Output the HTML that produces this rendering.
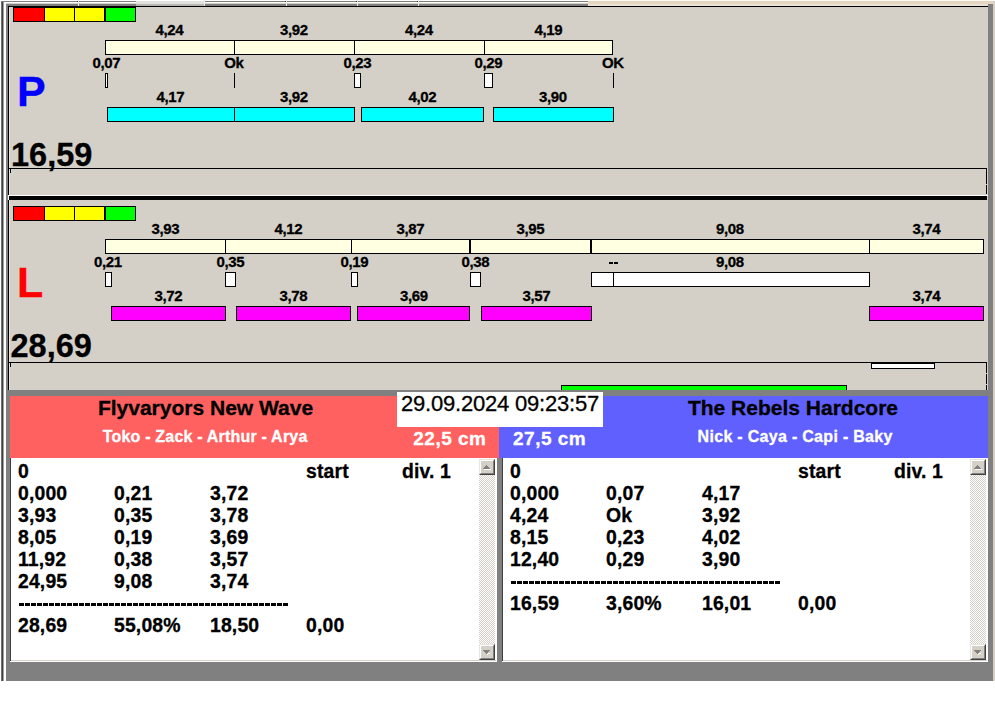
<!DOCTYPE html>
<html><head><meta charset="utf-8"><style>
html,body{margin:0;padding:0;}
body{width:995px;height:716px;overflow:hidden;position:relative;background:#fff;font-family:"Liberation Sans",sans-serif;}
body>div{position:absolute;box-sizing:content-box;}
.t{white-space:pre;-webkit-text-stroke:0.3px currentColor;}
</style></head><body>
<div style="left:0px;top:0px;width:995px;height:681px;background:#d4d0c8;"></div>
<div style="left:0px;top:0px;width:1px;height:716px;background:#fff;"></div>
<div style="left:0px;top:0px;width:995px;height:1px;background:#fff;"></div>
<div style="left:1px;top:1px;width:1px;height:680px;background:#707070;"></div>
<div style="left:2px;top:1px;width:1px;height:680px;background:#404040;"></div>
<div style="left:3px;top:1px;width:1px;height:680px;background:#a0a0a0;"></div>
<div style="left:4px;top:1px;width:2px;height:680px;background:#ffffff;"></div>
<div style="left:6px;top:4px;width:2px;height:677px;background:#808080;"></div>
<div style="left:9px;top:7px;width:1px;height:383px;background:#e6e3dc;"></div>
<div style="left:1px;top:1px;width:587px;height:1px;background:#808080;"></div>
<div style="left:4px;top:2px;width:584px;height:1px;background:#ffffff;"></div>
<div style="left:6px;top:4px;width:582px;height:2px;background:#808080;"></div>
<div style="left:78px;top:0px;width:1px;height:6px;background:#e8e8e8;"></div>
<div style="left:77px;top:1px;width:1px;height:1px;background:#303030;"></div>
<div style="left:204px;top:0px;width:1px;height:6px;background:#e8e8e8;"></div>
<div style="left:203px;top:1px;width:1px;height:1px;background:#303030;"></div>
<div style="left:286px;top:0px;width:1px;height:6px;background:#e8e8e8;"></div>
<div style="left:285px;top:1px;width:1px;height:1px;background:#303030;"></div>
<div style="left:357px;top:0px;width:1px;height:6px;background:#e8e8e8;"></div>
<div style="left:356px;top:1px;width:1px;height:1px;background:#303030;"></div>
<div style="left:418px;top:0px;width:1px;height:6px;background:#e8e8e8;"></div>
<div style="left:417px;top:1px;width:1px;height:1px;background:#303030;"></div>
<div style="left:136px;top:1px;width:68px;height:3px;background:#e4e2dc;"></div>
<div style="left:136px;top:4px;width:68px;height:2px;background:#b8b6b0;"></div>
<div style="left:588px;top:0px;width:405px;height:1px;background:#fcfbef;"></div>
<div style="left:588px;top:1px;width:405px;height:3px;background:#e4d6c3;"></div>
<div style="left:588px;top:4px;width:405px;height:2px;background:#ebe2d4;"></div>
<div style="left:988px;top:4px;width:5px;height:677px;background:#808080;"></div>
<div style="left:6px;top:662px;width:987px;height:19px;background:#808080;"></div>
<div style="left:6px;top:390px;width:4px;height:272px;background:#808080;"></div>
<div style="left:8px;top:6px;width:980px;height:1px;background:#000;"></div>
<div style="left:8px;top:6px;width:1px;height:189px;background:#000;"></div>
<div style="left:8px;top:200px;width:1px;height:190px;background:#000;"></div>
<div style="left:13px;top:7px;width:30px;height:13px;background:#ff0000;border:1px solid #000"></div>
<div style="left:44px;top:7px;width:29px;height:13px;background:#ffff00;border:1px solid #000"></div>
<div style="left:74px;top:7px;width:29px;height:13px;background:#ffff00;border:1px solid #000"></div>
<div style="left:105px;top:7px;width:29px;height:13px;background:#00ff00;border:1px solid #000"></div>
<div style="left:105px;top:40px;width:506px;height:13px;background:#ffffe1;border:1px solid #000"></div>
<div style="left:234px;top:40px;width:1px;height:15px;background:#000;"></div>
<div style="left:354px;top:40px;width:1px;height:15px;background:#000;"></div>
<div style="left:484px;top:40px;width:1px;height:15px;background:#000;"></div>
<div class="t" style="top:22px;font-size:15px;font-weight:bold;color:#000;line-height:15px;letter-spacing:-0.35px;left:119.325px;width:100px;text-align:center;">4,24</div>
<div class="t" style="top:22px;font-size:15px;font-weight:bold;color:#000;line-height:15px;letter-spacing:-0.35px;left:243.825px;width:100px;text-align:center;">3,92</div>
<div class="t" style="top:22px;font-size:15px;font-weight:bold;color:#000;line-height:15px;letter-spacing:-0.35px;left:368.825px;width:100px;text-align:center;">4,24</div>
<div class="t" style="top:22px;font-size:15px;font-weight:bold;color:#000;line-height:15px;letter-spacing:-0.35px;left:498.325px;width:100px;text-align:center;">4,19</div>
<div class="t" style="top:55px;font-size:15px;font-weight:bold;color:#000;line-height:15px;letter-spacing:-0.35px;left:56.325px;width:100px;text-align:center;">0,07</div>
<div class="t" style="top:55px;font-size:15px;font-weight:bold;color:#000;line-height:15px;letter-spacing:-0.35px;left:183.825px;width:100px;text-align:center;">Ok</div>
<div class="t" style="top:55px;font-size:15px;font-weight:bold;color:#000;line-height:15px;letter-spacing:-0.35px;left:307.325px;width:100px;text-align:center;">0,23</div>
<div class="t" style="top:55px;font-size:15px;font-weight:bold;color:#000;line-height:15px;letter-spacing:-0.35px;left:438.325px;width:100px;text-align:center;">0,29</div>
<div class="t" style="top:55px;font-size:15px;font-weight:bold;color:#000;line-height:15px;letter-spacing:-0.35px;left:562.825px;width:100px;text-align:center;">OK</div>
<div style="left:105px;top:73px;width:1px;height:13px;background:#fff;border:1px solid #000"></div>
<div style="left:234px;top:73px;width:1px;height:15px;background:#000;"></div>
<div style="left:354px;top:73px;width:5px;height:13px;background:#fff;border:1px solid #000"></div>
<div style="left:484px;top:73px;width:7px;height:13px;background:#fff;border:1px solid #000"></div>
<div style="left:613px;top:73px;width:1px;height:15px;background:#000;"></div>
<div class="t" style="top:89px;font-size:15px;font-weight:bold;color:#000;line-height:15px;letter-spacing:-0.35px;left:120.325px;width:100px;text-align:center;">4,17</div>
<div class="t" style="top:89px;font-size:15px;font-weight:bold;color:#000;line-height:15px;letter-spacing:-0.35px;left:243.825px;width:100px;text-align:center;">3,92</div>
<div class="t" style="top:89px;font-size:15px;font-weight:bold;color:#000;line-height:15px;letter-spacing:-0.35px;left:372.325px;width:100px;text-align:center;">4,02</div>
<div class="t" style="top:89px;font-size:15px;font-weight:bold;color:#000;line-height:15px;letter-spacing:-0.35px;left:502.825px;width:100px;text-align:center;">3,90</div>
<div style="left:107px;top:107px;width:126px;height:13px;background:#00ffff;border:1px solid #000"></div>
<div style="left:234px;top:107px;width:119px;height:13px;background:#00ffff;border:1px solid #000"></div>
<div style="left:361px;top:107px;width:121px;height:13px;background:#00ffff;border:1px solid #000"></div>
<div style="left:493px;top:107px;width:119px;height:13px;background:#00ffff;border:1px solid #000"></div>
<div class="t" style="top:70px;font-size:43px;font-weight:bold;color:#0000ff;line-height:43px;letter-spacing:0px;left:17px;">P</div>
<div class="t" style="top:139px;font-size:32.5px;font-weight:bold;color:#000;line-height:32.5px;letter-spacing:0px;left:11px;">16,59</div>
<div style="left:8px;top:168px;width:979px;height:1px;background:#000;"></div>
<div style="left:986px;top:168px;width:1px;height:16px;background:#000;"></div>
<div style="left:986px;top:185px;width:1px;height:9px;background:#000;"></div>
<div style="left:10px;top:169px;width:1px;height:4px;background:#000;"></div>
<div style="left:8px;top:195px;width:980px;height:1px;background:#fff;"></div>
<div style="left:8px;top:195px;width:1px;height:5px;background:#fff;"></div>
<div style="left:9px;top:196px;width:978px;height:4px;background:#000;"></div>
<div style="left:13px;top:206px;width:30px;height:13px;background:#ff0000;border:1px solid #000"></div>
<div style="left:44px;top:206px;width:29px;height:13px;background:#ffff00;border:1px solid #000"></div>
<div style="left:74px;top:206px;width:29px;height:13px;background:#ffff00;border:1px solid #000"></div>
<div style="left:105px;top:206px;width:29px;height:13px;background:#00ff00;border:1px solid #000"></div>
<div style="left:105px;top:239px;width:877px;height:13px;background:#ffffe1;border:1px solid #000"></div>
<div style="left:225px;top:239px;width:1px;height:15px;background:#000;"></div>
<div style="left:351px;top:239px;width:1px;height:15px;background:#000;"></div>
<div style="left:469px;top:239px;width:2px;height:15px;background:#000;"></div>
<div style="left:590px;top:239px;width:2px;height:15px;background:#000;"></div>
<div style="left:869px;top:239px;width:1px;height:15px;background:#000;"></div>
<div class="t" style="top:221px;font-size:15px;font-weight:bold;color:#000;line-height:15px;letter-spacing:-0.35px;left:115.325px;width:100px;text-align:center;">3,93</div>
<div class="t" style="top:221px;font-size:15px;font-weight:bold;color:#000;line-height:15px;letter-spacing:-0.35px;left:238.325px;width:100px;text-align:center;">4,12</div>
<div class="t" style="top:221px;font-size:15px;font-weight:bold;color:#000;line-height:15px;letter-spacing:-0.35px;left:360.325px;width:100px;text-align:center;">3,87</div>
<div class="t" style="top:221px;font-size:15px;font-weight:bold;color:#000;line-height:15px;letter-spacing:-0.35px;left:480.325px;width:100px;text-align:center;">3,95</div>
<div class="t" style="top:221px;font-size:15px;font-weight:bold;color:#000;line-height:15px;letter-spacing:-0.35px;left:679.825px;width:100px;text-align:center;">9,08</div>
<div class="t" style="top:221px;font-size:15px;font-weight:bold;color:#000;line-height:15px;letter-spacing:-0.35px;left:876.325px;width:100px;text-align:center;">3,74</div>
<div class="t" style="top:254px;font-size:15px;font-weight:bold;color:#000;line-height:15px;letter-spacing:-0.35px;left:57.825px;width:100px;text-align:center;">0,21</div>
<div class="t" style="top:254px;font-size:15px;font-weight:bold;color:#000;line-height:15px;letter-spacing:-0.35px;left:180.325px;width:100px;text-align:center;">0,35</div>
<div class="t" style="top:254px;font-size:15px;font-weight:bold;color:#000;line-height:15px;letter-spacing:-0.35px;left:304.325px;width:100px;text-align:center;">0,19</div>
<div class="t" style="top:254px;font-size:15px;font-weight:bold;color:#000;line-height:15px;letter-spacing:-0.35px;left:425.325px;width:100px;text-align:center;">0,38</div>
<div class="t" style="top:254px;font-size:15px;font-weight:bold;color:#000;line-height:15px;letter-spacing:-0.35px;left:679.825px;width:100px;text-align:center;">9,08</div>
<div style="left:105px;top:272px;width:5px;height:13px;background:#fff;border:1px solid #000"></div>
<div style="left:225px;top:272px;width:9px;height:13px;background:#fff;border:1px solid #000"></div>
<div style="left:351px;top:272px;width:5px;height:13px;background:#fff;border:1px solid #000"></div>
<div style="left:470px;top:272px;width:9px;height:13px;background:#fff;border:1px solid #000"></div>
<div style="left:591px;top:272px;width:277px;height:13px;background:#fff;border:1px solid #000"></div>
<div style="left:613px;top:272px;width:1px;height:15px;background:#000;"></div>
<div style="left:609px;top:262px;width:4px;height:2px;background:#000;"></div>
<div style="left:614px;top:262px;width:4px;height:2px;background:#000;"></div>
<div class="t" style="top:288px;font-size:15px;font-weight:bold;color:#000;line-height:15px;letter-spacing:-0.35px;left:118.325px;width:100px;text-align:center;">3,72</div>
<div class="t" style="top:288px;font-size:15px;font-weight:bold;color:#000;line-height:15px;letter-spacing:-0.35px;left:243.325px;width:100px;text-align:center;">3,78</div>
<div class="t" style="top:288px;font-size:15px;font-weight:bold;color:#000;line-height:15px;letter-spacing:-0.35px;left:363.825px;width:100px;text-align:center;">3,69</div>
<div class="t" style="top:288px;font-size:15px;font-weight:bold;color:#000;line-height:15px;letter-spacing:-0.35px;left:486.325px;width:100px;text-align:center;">3,57</div>
<div class="t" style="top:288px;font-size:15px;font-weight:bold;color:#000;line-height:15px;letter-spacing:-0.35px;left:876.325px;width:100px;text-align:center;">3,74</div>
<div style="left:111px;top:306px;width:113px;height:13px;background:#ff00ff;border:1px solid #000"></div>
<div style="left:236px;top:306px;width:113px;height:13px;background:#ff00ff;border:1px solid #000"></div>
<div style="left:357px;top:306px;width:111px;height:13px;background:#ff00ff;border:1px solid #000"></div>
<div style="left:481px;top:306px;width:109px;height:13px;background:#ff00ff;border:1px solid #000"></div>
<div style="left:869px;top:306px;width:113px;height:13px;background:#ff00ff;border:1px solid #000"></div>
<div class="t" style="top:261px;font-size:43px;font-weight:bold;color:#ff0000;line-height:43px;letter-spacing:0px;left:17px;">L</div>
<div class="t" style="top:330px;font-size:32.5px;font-weight:bold;color:#000;line-height:32.5px;letter-spacing:0px;left:10.5px;">28,69</div>
<div style="left:8px;top:362px;width:979px;height:1px;background:#000;"></div>
<div style="left:10px;top:363px;width:1px;height:4px;background:#000;"></div>
<div style="left:871px;top:363px;width:62px;height:4px;background:#fff;border:1px solid #000"></div>
<div style="left:986px;top:362px;width:1px;height:11px;background:#000;"></div>
<div style="left:986px;top:374px;width:1px;height:10px;background:#000;"></div>
<div style="left:986px;top:385px;width:1px;height:5px;background:#000;"></div>
<div style="left:561px;top:385px;width:284px;height:6px;background:#00ff00;border:1px solid #000"></div>
<div style="left:6px;top:390px;width:987px;height:6px;background:#808080;"></div>
<div style="left:10px;top:396px;width:489px;height:62px;background:#ff6060;"></div>
<div style="left:499px;top:396px;width:489px;height:62px;background:#6060ff;"></div>
<div style="left:397px;top:392px;width:206px;height:35px;background:#fff;"></div>
<div class="t" style="top:393px;font-size:22px;font-weight:normal;color:#000;line-height:22px;letter-spacing:-0.2px;left:401px;">29.09.2024 09:23:57</div>
<div class="t" style="top:397px;font-size:21px;font-weight:bold;color:#000;line-height:21px;letter-spacing:0px;left:15.5px;width:380px;text-align:center;">Flyvaryors New Wave</div>
<div class="t" style="top:429px;font-size:16px;font-weight:bold;color:#fff;line-height:16px;letter-spacing:0.2px;left:15.1px;width:380px;text-align:center;">Toko - Zack - Arthur - Arya</div>
<div class="t" style="top:429px;font-size:19px;font-weight:bold;color:#fff;line-height:19px;letter-spacing:0.5px;left:366.5px;width:120px;text-align:right;">22,5 cm</div>
<div class="t" style="top:429px;font-size:19px;font-weight:bold;color:#fff;line-height:19px;letter-spacing:0.5px;left:513px;">27,5 cm</div>
<div class="t" style="top:397px;font-size:21px;font-weight:bold;color:#000;line-height:21px;letter-spacing:0px;left:603.0px;width:380px;text-align:center;">The Rebels Hardcore</div>
<div class="t" style="top:429px;font-size:16px;font-weight:bold;color:#fff;line-height:16px;letter-spacing:0.3px;left:605.15px;width:380px;text-align:center;">Nick - Caya - Capi - Baky</div>
<div style="left:497px;top:458px;width:5px;height:204px;background:#808080;"></div>
<div style="left:10px;top:458px;width:487px;height:204px;background:#fff;"></div>
<div style="left:10px;top:458px;width:1px;height:203px;background:#404040;"></div>
<div style="left:495px;top:458px;width:2px;height:204px;background:#fff;"></div>
<div style="left:11px;top:660px;width:485px;height:1px;background:#d4d0c8;"></div>
<div style="left:479px;top:475px;width:16px;height:169px;background-image:repeating-conic-gradient(#d4d0c8 0 25%, #ffffff 0 50%);background-size:2px 2px"></div>
<div style="left:479px;top:459px;width:14px;height:14px;background:#d4d0c8;border-top:1px solid #e8e6e0;border-left:1px solid #e8e6e0;border-right:1px solid #404040;border-bottom:1px solid #404040"></div>
<div style="left:480px;top:460px;width:12px;height:12px;border-top:1px solid #fff;border-left:1px solid #fff;border-right:1px solid #808080;border-bottom:1px solid #808080"></div>
<div style="left:486px;top:465px;width:1px;height:1px;background:#808080;"></div>
<div style="left:485px;top:466px;width:3px;height:1px;background:#808080;"></div>
<div style="left:484px;top:467px;width:5px;height:1px;background:#808080;"></div>
<div style="left:483px;top:468px;width:7px;height:1px;background:#808080;"></div>
<div style="left:484px;top:469px;width:7px;height:1px;background:#ffffff;"></div>
<div style="left:479px;top:644px;width:14px;height:14px;background:#d4d0c8;border-top:1px solid #e8e6e0;border-left:1px solid #e8e6e0;border-right:1px solid #404040;border-bottom:1px solid #404040"></div>
<div style="left:480px;top:645px;width:12px;height:12px;border-top:1px solid #fff;border-left:1px solid #fff;border-right:1px solid #808080;border-bottom:1px solid #808080"></div>
<div style="left:483px;top:650px;width:7px;height:1px;background:#808080;"></div>
<div style="left:484px;top:651px;width:5px;height:1px;background:#808080;"></div>
<div style="left:485px;top:652px;width:3px;height:1px;background:#808080;"></div>
<div style="left:486px;top:653px;width:1px;height:1px;background:#808080;"></div>
<div style="left:487px;top:654px;width:1px;height:1px;background:#ffffff;"></div>
<div style="left:488px;top:653px;width:2px;height:1px;background:#ffffff;"></div>
<div class="t" style="top:462px;font-size:19.4px;font-weight:bold;color:#000;line-height:19.4px;letter-spacing:0.15px;left:18px;">0</div>
<div class="t" style="top:462px;font-size:19.4px;font-weight:bold;color:#000;line-height:19.4px;letter-spacing:0.15px;left:306px;">start</div>
<div class="t" style="top:462px;font-size:19.4px;font-weight:bold;color:#000;line-height:19.4px;letter-spacing:0.15px;left:402px;">div. 1</div>
<div class="t" style="top:484px;font-size:19.4px;font-weight:bold;color:#000;line-height:19.4px;letter-spacing:0.15px;left:18px;">0,000</div>
<div class="t" style="top:484px;font-size:19.4px;font-weight:bold;color:#000;line-height:19.4px;letter-spacing:0.15px;left:114px;">0,21</div>
<div class="t" style="top:484px;font-size:19.4px;font-weight:bold;color:#000;line-height:19.4px;letter-spacing:0.15px;left:210px;">3,72</div>
<div class="t" style="top:506px;font-size:19.4px;font-weight:bold;color:#000;line-height:19.4px;letter-spacing:0.15px;left:18px;">3,93</div>
<div class="t" style="top:506px;font-size:19.4px;font-weight:bold;color:#000;line-height:19.4px;letter-spacing:0.15px;left:114px;">0,35</div>
<div class="t" style="top:506px;font-size:19.4px;font-weight:bold;color:#000;line-height:19.4px;letter-spacing:0.15px;left:210px;">3,78</div>
<div class="t" style="top:528px;font-size:19.4px;font-weight:bold;color:#000;line-height:19.4px;letter-spacing:0.15px;left:18px;">8,05</div>
<div class="t" style="top:528px;font-size:19.4px;font-weight:bold;color:#000;line-height:19.4px;letter-spacing:0.15px;left:114px;">0,19</div>
<div class="t" style="top:528px;font-size:19.4px;font-weight:bold;color:#000;line-height:19.4px;letter-spacing:0.15px;left:210px;">3,69</div>
<div class="t" style="top:550px;font-size:19.4px;font-weight:bold;color:#000;line-height:19.4px;letter-spacing:0.15px;left:18px;">11,92</div>
<div class="t" style="top:550px;font-size:19.4px;font-weight:bold;color:#000;line-height:19.4px;letter-spacing:0.15px;left:114px;">0,38</div>
<div class="t" style="top:550px;font-size:19.4px;font-weight:bold;color:#000;line-height:19.4px;letter-spacing:0.15px;left:210px;">3,57</div>
<div class="t" style="top:572px;font-size:19.4px;font-weight:bold;color:#000;line-height:19.4px;letter-spacing:0.15px;left:18px;">24,95</div>
<div class="t" style="top:572px;font-size:19.4px;font-weight:bold;color:#000;line-height:19.4px;letter-spacing:0.15px;left:114px;">9,08</div>
<div class="t" style="top:572px;font-size:19.4px;font-weight:bold;color:#000;line-height:19.4px;letter-spacing:0.15px;left:210px;">3,74</div>
<div style="left:19px;top:603px;width:270px;height:3px;background:repeating-linear-gradient(90deg,#000 0 5px,transparent 5px 6px)"></div>
<div class="t" style="top:616px;font-size:19.4px;font-weight:bold;color:#000;line-height:19.4px;letter-spacing:0.15px;left:18px;">28,69</div>
<div class="t" style="top:616px;font-size:19.4px;font-weight:bold;color:#000;line-height:19.4px;letter-spacing:0.15px;left:114px;">55,08%</div>
<div class="t" style="top:616px;font-size:19.4px;font-weight:bold;color:#000;line-height:19.4px;letter-spacing:0.15px;left:210px;">18,50</div>
<div class="t" style="top:616px;font-size:19.4px;font-weight:bold;color:#000;line-height:19.4px;letter-spacing:0.15px;left:306px;">0,00</div>
<div style="left:502px;top:458px;width:486px;height:204px;background:#fff;"></div>
<div style="left:502px;top:458px;width:1px;height:203px;background:#404040;"></div>
<div style="left:986px;top:458px;width:2px;height:204px;background:#fff;"></div>
<div style="left:503px;top:660px;width:484px;height:1px;background:#d4d0c8;"></div>
<div style="left:970px;top:475px;width:16px;height:169px;background-image:repeating-conic-gradient(#d4d0c8 0 25%, #ffffff 0 50%);background-size:2px 2px"></div>
<div style="left:970px;top:459px;width:14px;height:14px;background:#d4d0c8;border-top:1px solid #e8e6e0;border-left:1px solid #e8e6e0;border-right:1px solid #404040;border-bottom:1px solid #404040"></div>
<div style="left:971px;top:460px;width:12px;height:12px;border-top:1px solid #fff;border-left:1px solid #fff;border-right:1px solid #808080;border-bottom:1px solid #808080"></div>
<div style="left:977px;top:465px;width:1px;height:1px;background:#808080;"></div>
<div style="left:976px;top:466px;width:3px;height:1px;background:#808080;"></div>
<div style="left:975px;top:467px;width:5px;height:1px;background:#808080;"></div>
<div style="left:974px;top:468px;width:7px;height:1px;background:#808080;"></div>
<div style="left:975px;top:469px;width:7px;height:1px;background:#ffffff;"></div>
<div style="left:970px;top:644px;width:14px;height:14px;background:#d4d0c8;border-top:1px solid #e8e6e0;border-left:1px solid #e8e6e0;border-right:1px solid #404040;border-bottom:1px solid #404040"></div>
<div style="left:971px;top:645px;width:12px;height:12px;border-top:1px solid #fff;border-left:1px solid #fff;border-right:1px solid #808080;border-bottom:1px solid #808080"></div>
<div style="left:974px;top:650px;width:7px;height:1px;background:#808080;"></div>
<div style="left:975px;top:651px;width:5px;height:1px;background:#808080;"></div>
<div style="left:976px;top:652px;width:3px;height:1px;background:#808080;"></div>
<div style="left:977px;top:653px;width:1px;height:1px;background:#808080;"></div>
<div style="left:978px;top:654px;width:1px;height:1px;background:#ffffff;"></div>
<div style="left:979px;top:653px;width:2px;height:1px;background:#ffffff;"></div>
<div class="t" style="top:462px;font-size:19.4px;font-weight:bold;color:#000;line-height:19.4px;letter-spacing:0.15px;left:510px;">0</div>
<div class="t" style="top:462px;font-size:19.4px;font-weight:bold;color:#000;line-height:19.4px;letter-spacing:0.15px;left:798px;">start</div>
<div class="t" style="top:462px;font-size:19.4px;font-weight:bold;color:#000;line-height:19.4px;letter-spacing:0.15px;left:894px;">div. 1</div>
<div class="t" style="top:484px;font-size:19.4px;font-weight:bold;color:#000;line-height:19.4px;letter-spacing:0.15px;left:510px;">0,000</div>
<div class="t" style="top:484px;font-size:19.4px;font-weight:bold;color:#000;line-height:19.4px;letter-spacing:0.15px;left:606px;">0,07</div>
<div class="t" style="top:484px;font-size:19.4px;font-weight:bold;color:#000;line-height:19.4px;letter-spacing:0.15px;left:702px;">4,17</div>
<div class="t" style="top:506px;font-size:19.4px;font-weight:bold;color:#000;line-height:19.4px;letter-spacing:0.15px;left:510px;">4,24</div>
<div class="t" style="top:506px;font-size:19.4px;font-weight:bold;color:#000;line-height:19.4px;letter-spacing:0.15px;left:606px;">Ok</div>
<div class="t" style="top:506px;font-size:19.4px;font-weight:bold;color:#000;line-height:19.4px;letter-spacing:0.15px;left:702px;">3,92</div>
<div class="t" style="top:528px;font-size:19.4px;font-weight:bold;color:#000;line-height:19.4px;letter-spacing:0.15px;left:510px;">8,15</div>
<div class="t" style="top:528px;font-size:19.4px;font-weight:bold;color:#000;line-height:19.4px;letter-spacing:0.15px;left:606px;">0,23</div>
<div class="t" style="top:528px;font-size:19.4px;font-weight:bold;color:#000;line-height:19.4px;letter-spacing:0.15px;left:702px;">4,02</div>
<div class="t" style="top:550px;font-size:19.4px;font-weight:bold;color:#000;line-height:19.4px;letter-spacing:0.15px;left:510px;">12,40</div>
<div class="t" style="top:550px;font-size:19.4px;font-weight:bold;color:#000;line-height:19.4px;letter-spacing:0.15px;left:606px;">0,29</div>
<div class="t" style="top:550px;font-size:19.4px;font-weight:bold;color:#000;line-height:19.4px;letter-spacing:0.15px;left:702px;">3,90</div>
<div style="left:511px;top:581px;width:270px;height:3px;background:repeating-linear-gradient(90deg,#000 0 5px,transparent 5px 6px)"></div>
<div class="t" style="top:594px;font-size:19.4px;font-weight:bold;color:#000;line-height:19.4px;letter-spacing:0.15px;left:510px;">16,59</div>
<div class="t" style="top:594px;font-size:19.4px;font-weight:bold;color:#000;line-height:19.4px;letter-spacing:0.15px;left:606px;">3,60%</div>
<div class="t" style="top:594px;font-size:19.4px;font-weight:bold;color:#000;line-height:19.4px;letter-spacing:0.15px;left:702px;">16,01</div>
<div class="t" style="top:594px;font-size:19.4px;font-weight:bold;color:#000;line-height:19.4px;letter-spacing:0.15px;left:798px;">0,00</div>
</body></html>
